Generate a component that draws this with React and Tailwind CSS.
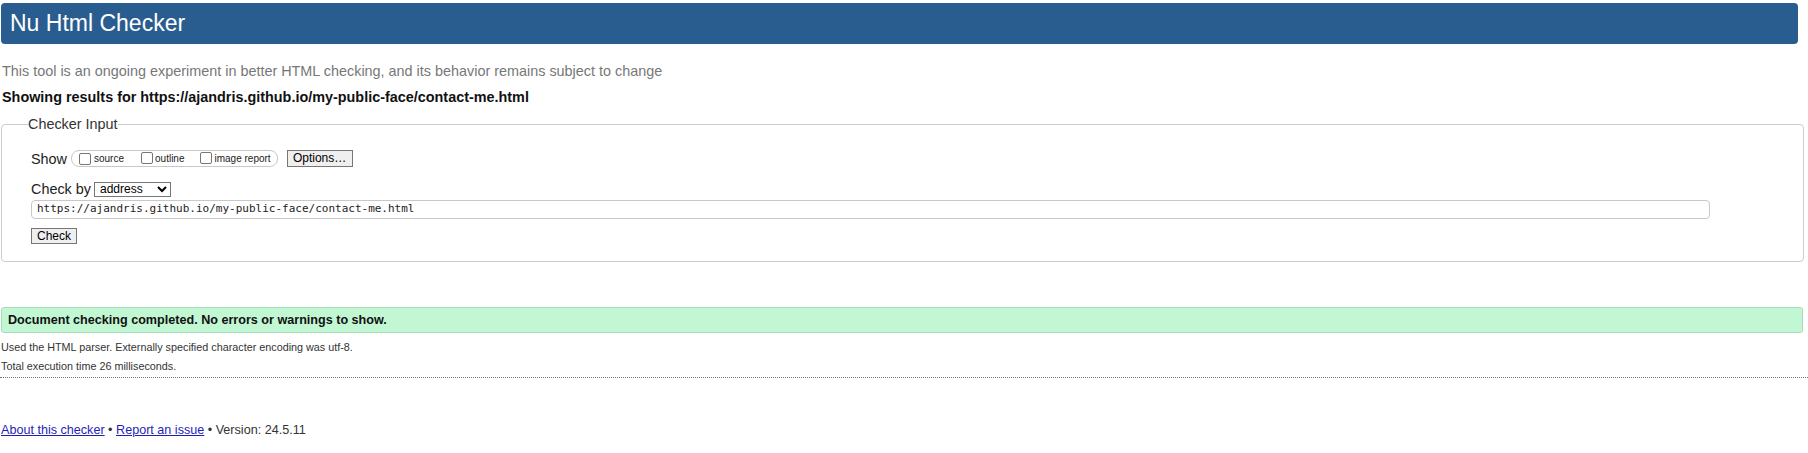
export default function App() {
  const Box = () => (
    <span className="inline-block w-[12px] h-[12px] border border-[#767676] rounded-[2px] bg-white shrink-0" />
  );
  return (
    <div className="w-[1808px] h-[453px] overflow-hidden bg-white font-['Liberation_Sans',Arial,sans-serif] text-[#222]">
      <header className="mt-[3px] ml-[1px] mr-[10px] h-[41px] rounded-[4px] bg-[#2a5d8f] flex items-center pl-[9px]">
        <h1 className="text-[23px] leading-none font-normal text-white">Nu Html Checker</h1>
      </header>

      <p className="mt-[19px] ml-[2px] text-[14.4px] leading-[16px] text-[#777]">
        This tool is an ongoing experiment in better HTML checking, and its behavior remains subject to change
      </p>
      <p className="mt-[10px] ml-[2px] text-[14.4px] leading-[16px] font-bold text-[#111]">
        Showing results for https://ajandris.github.io/my-public-face/contact-me.html
      </p>

      <fieldset className="mt-[11px] ml-[1px] mr-[4px] border border-[#cccccc] rounded-[4px] px-[26px] pb-[17px]">
        <legend className="text-[14.4px] leading-[16px] text-[#333]">Checker Input</legend>
        <div className="pl-[3px]">
          <div className="mt-[18px] flex items-center h-[17px]">
            <span className="text-[14.4px] leading-[16px] mr-[4px]">Show</span>
            <div className="flex items-center h-[17px] border border-[#c8c8c8] rounded-[8px] pl-[7px] pr-[6px] text-[10px] leading-[10px] text-[#222]">
              <Box />
              <span className="ml-[3px] pt-[1px]">source</span>
              <span className="ml-[17px]"><Box /></span>
              <span className="ml-[2px] pt-[1px]">outline</span>
              <span className="ml-[16px]"><Box /></span>
              <span className="ml-[2px] pt-[1px]">image report</span>
            </div>
            <button className="ml-[9px] w-[66px] h-[17px] border border-[#767676] bg-[#efefef] text-[12px] leading-[15px] text-black">
              Options…
            </button>
          </div>

          <div className="mt-[14px] flex items-center h-[16px]">
            <span className="text-[14.4px] leading-[16px]">Check by</span>
            <div className="ml-[3px] w-[77px] h-[15px] border border-[#767676] bg-white flex items-center justify-between pl-[5px] pr-[3px] text-[12px] leading-[13px] text-black">
              <span>address</span>
              <svg width="10" height="7" viewBox="0 0 10 7" className="shrink-0">
                <polyline points="1,1 5,5 9,1" fill="none" stroke="#000" strokeWidth="2" />
              </svg>
            </div>
          </div>

          <div className="mt-[3px] w-[1679px] h-[19px] border border-[#c8c8c8] rounded-[4px] flex items-center pl-[5px] font-['DejaVu_Sans_Mono',monospace] text-[11px] text-[#222]">
            https://ajandris.github.io/my-public-face/contact-me.html
          </div>

          <button className="mt-[9px] block w-[46px] h-[16px] border border-[#767676] bg-[#efefef] text-[12px] leading-[14px] text-black">
            Check
          </button>
        </div>
      </fieldset>

      <div className="mt-[45px] ml-[1px] mr-[5px] h-[26px] rounded-[3px] border border-[#a9dcb9] bg-[#c2f7d3] flex items-center pl-[6px]">
        <span className="text-[12.6px] leading-[14px] font-bold text-[#111]">
          Document checking completed. No errors or warnings to show.
        </span>
      </div>

      <div className="mt-[5px] ml-[1px] text-[10.8px] leading-[19px] text-[#333]">
        <p>Used the HTML parser. Externally specified character encoding was utf-8.</p>
        <p>Total execution time 26 milliseconds.</p>
      </div>

      <div className="mt-[1px] border-t border-dotted border-[#777]" />

      <p className="mt-[44px] ml-[1px] text-[12.6px] leading-[16px] text-[#333]">
        <a href="#" className="text-[#1f1fb8] underline">About this checker</a>
        {" • "}
        <a href="#" className="text-[#1f1fb8] underline">Report an issue</a>
        {" • Version: 24.5.11"}
      </p>
    </div>
  );
}
